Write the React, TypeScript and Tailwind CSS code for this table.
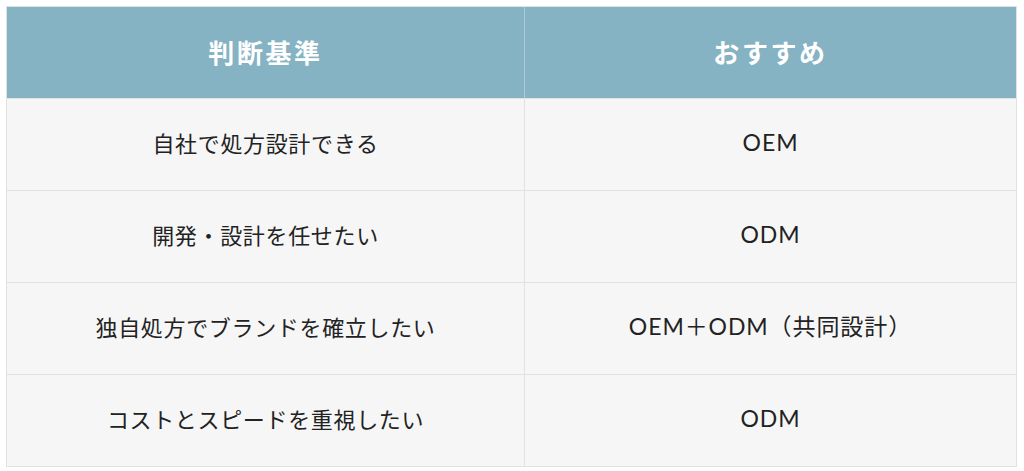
export default function App() {
  const rows = [
    ["自社で処方設計できる", "OEM"],
    ["開発・設計を任せたい", "ODM"],
    ["独自処方でブランドを確立したい", "OEM＋ODM（共同設計）"],
    ["コストとスピードを重視したい", "ODM"],
  ];
  const font = { fontFamily: '"Noto Sans CJK JP", "Noto Sans", sans-serif' };
  const latin = { fontFamily: 'Lato, "Noto Sans CJK JP", sans-serif' };
  return (
    <div className="w-[1024px] h-[471px] bg-white pt-[6px] pl-[6px]" style={font}>
      <div className="w-[1011px] border border-[#e2e2e2] grid grid-cols-[518px_1fr]">
        <div className="h-[91px] bg-[#85b3c3] flex items-center justify-center text-white text-[26px] font-bold tracking-[0.1em] border-r border-[#a9cad6] pb-[2px]">
          判断基準
        </div>
        <div className="h-[91px] bg-[#85b3c3] flex items-center justify-center text-white text-[26px] font-bold tracking-[0.1em] pb-[2px]">
          おすすめ
        </div>
        {rows.map(([a, b], i) => (
          <>
            <div key={"a" + i} className="h-[92px] bg-[#f6f6f6] border-t border-r border-[#e2e2e2] flex items-center justify-center text-[#222] text-[22px] tracking-[0.03em] pb-[4px]">
              {a}
            </div>
            <div key={"b" + i} className="h-[92px] bg-[#f6f6f6] border-t border-[#e2e2e2] flex items-center justify-center text-[#222] text-[23px] tracking-[0.04em] pb-[4px]" style={latin}>
              {b}
            </div>
          </>
        ))}
      </div>
    </div>
  );
}
